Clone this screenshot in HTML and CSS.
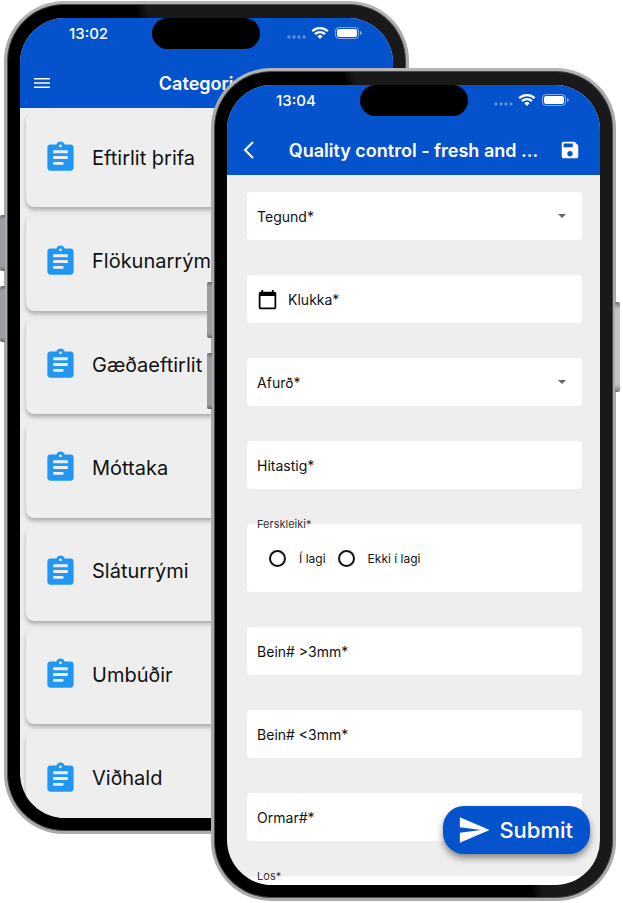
FILE: index.html
```html
<!DOCTYPE html>
<html lang="is">

<head>
    <meta charset="UTF-8">
    <meta name="viewport" content="width=device-width, initial-scale=1.0">
    <title>Quality control</title>
    <link rel="stylesheet" href="styles.css">
</head>

<body>
    <!-- shared icons -->
    <svg class="sprite" aria-hidden="true">
        <symbol id="assignment" viewBox="0 0 24 24">
            <path d="M19 3h-4.18C14.4 1.84 13.3 1 12 1c-1.3 0-2.4.84-2.82 2H5c-1.1 0-2 .9-2 2v14c0 1.100.9 2 2 2h14c1.100 0 2-.9 2-2V5c0-1.100-.9-2-2-2zm-7 0c.55 0 1 .45 1 1s-.45 1-1 1-1-.45-1-1 .45-1 1-1zm2 14H7v-2h7v2zm3-4H7v-2h10v2zm0-4H7V7h10v2z" />
        </symbol>
        <symbol id="signal" viewBox="0 0 76 14">
            <g opacity=".35">
                <circle cx="3" cy="11" r="1.700" />
                <circle cx="8" cy="11" r="1.700" />
                <circle cx="13" cy="11" r="1.700" />
                <circle cx="18" cy="11" r="1.700" />
            </g>
            <g fill="none" stroke="currentColor" stroke-width="2.300">
                <path d="M26.200 5.200a11.200 11.200 0 0 1 15.600 0" />
                <path d="M29 8.200a7.200 7.200 0 0 1 10 0" />
            </g>
            <path d="M34 13l-2.600-2.700a3.700 3.700 0 0 1 5.200 0z" />
            <rect x="49.500" y="1.500" width="23" height="11" rx="3.500" fill="none" stroke="currentColor" opacity=".5" />
            <rect x="51" y="3" width="20" height="8" rx="2.200" />
            <path d="M74 5v4c1.200-.4 1.800-1.200 1.800-2s-.6-1.600-1.800-2z" opacity=".5" />
        </symbol>
        <symbol id="arrow" viewBox="0 0 8 4">
            <path d="M0 0h8L4 4z" />
        </symbol>
    </svg>

    <main class="stage">
        <section class="phone phone-back">
            <div class="screen">
                <header class="top">
                    <div class="status">
                        <span>13:02</span>
                        <div class="island"></div>
                        <svg class="signal"><use href="#signal" /></svg>
                    </div>
                    <div class="app-bar">
                        <button class="icon-btn" type="button" aria-label="Menu">
                            <svg viewBox="0 0 22 22">
                                <path d="M3 6h16v1.600H3zM3 10.200h16v1.600H3zM3 14.400h16V16H3z" />
                            </svg>
                        </button>
                        <h1>Categories</h1>
                    </div>
                </header>
                <nav class="list">
                    <a class="card" href="#"><svg><use href="#assignment" /></svg>Eftirlit þrifa</a>
                    <a class="card" href="#"><svg><use href="#assignment" /></svg>Flökunarrými</a>
                    <a class="card" href="#"><svg><use href="#assignment" /></svg>Gæðaeftirlit</a>
                    <a class="card" href="#"><svg><use href="#assignment" /></svg>Móttaka</a>
                    <a class="card" href="#"><svg><use href="#assignment" /></svg>Sláturrými</a>
                    <a class="card" href="#"><svg><use href="#assignment" /></svg>Umbúðir</a>
                    <a class="card" href="#"><svg><use href="#assignment" /></svg>Viðhald</a>
                </nav>
            </div>
        </section>

        <section class="phone phone-front">
            <div class="side-btn"></div>
            <div class="screen">
                <header class="top">
                    <div class="status">
                        <span>13:04</span>
                        <div class="island"></div>
                        <svg class="signal"><use href="#signal" /></svg>
                    </div>
                    <div class="app-bar">
                        <button class="icon-btn" type="button" aria-label="Back">
                            <svg viewBox="0 0 22 22">
                                <path d="M15 3l-8 8 8 8" fill="none" stroke="currentColor" stroke-width="2" />
                            </svg>
                        </button>
                        <h1>Quality control - fresh and ...</h1>
                        <button class="icon-btn save" type="button" aria-label="Save">
                            <svg viewBox="0 0 24 24">
                                <path d="M17 3H5c-1.110 0-2 .9-2 2v14c0 1.100.89 2 2 2h14c1.100 0 2-.9 2-2V7l-4-4zm-5 16c-1.660 0-3-1.340-3-3s1.340-3 3-3 3 1.340 3 3-1.340 3-3 3zm3-10H5V5h10v4z" />
                            </svg>
                        </button>
                    </div>
                </header>
                <form class="form" id="qualityForm">
                    <label class="field">
                        <span>Tegund*</span>
                        <select name="tegund"><option value=""></option></select>
                        <svg class="arrow"><use href="#arrow" /></svg>
                    </label>
                    <label class="field">
                        <svg class="calendar" viewBox="0 0 24 24">
                            <path d="M20 3h-1V1h-2v2H7V1H5v2H4c-1.100 0-2 .9-2 2v16c0 1.100.9 2 2 2h16c1.100 0 2-.9 2-2V5c0-1.100-.9-2-2-2zm0 18H4V8h16v13z" />
                        </svg>
                        <span>Klukka*</span>
                        <input type="text" name="klukka">
                    </label>
                    <label class="field">
                        <span>Afurð*</span>
                        <select name="afurd"><option value=""></option></select>
                        <svg class="arrow"><use href="#arrow" /></svg>
                    </label>
                    <label class="field">
                        <span>Hitastig*</span>
                        <input type="text" name="hitastig">
                    </label>
                    <fieldset class="group">
                        <legend>Ferskleiki*</legend>
                        <label><input type="radio" name="ferskleiki" value="ok">Í lagi</label>
                        <label><input type="radio" name="ferskleiki" value="not-ok">Ekki í lagi</label>
                    </fieldset>
                    <label class="field">
                        <span>Bein# &gt;3mm*</span>
                        <input type="text" name="bein-over">
                    </label>
                    <label class="field">
                        <span>Bein# &lt;3mm*</span>
                        <input type="text" name="bein-under">
                    </label>
                    <label class="field">
                        <span>Ormar#*</span>
                        <input type="text" name="ormar">
                    </label>
                    <fieldset class="group">
                        <legend>Los*</legend>
                    </fieldset>
                </form>
                <button class="submit" type="submit" form="qualityForm">
                    <svg viewBox="0 0 24 24">
                        <path d="M2.010 21L23 12 2.010 3 2 10l15 2-15 2z" />
                    </svg>
                    Submit
                </button>
            </div>
        </section>
    </main>
</body>

</html>
```

FILE: styles.css
```css
* {
    box-sizing: border-box;
}

body {
    margin: 0;
    background-color: #fff;
    font-family: Inter, "Noto Sans", sans-serif;
    color: #111;
}

svg {
    display: block;
    flex: none;
    fill: currentColor;
}

button {
    border: 0;
    padding: 0;
    background: none;
    color: inherit;
    font: inherit;
    cursor: pointer;
}

.sprite {
    position: absolute;
    width: 0;
    height: 0;
}

/* both phones share one cell, the second one lies over the first */
.stage {
    display: grid;
    overflow: hidden;
}

.phone {
    grid-area: 1 / 1;
    position: relative;
    width: 65%;
    min-height: 0;
    aspect-ratio: 405 / 833;
    padding: 14px 13px 13px;
    border: 3px solid #a9aaae;
    border-top-color: #b4b4b4;
    border-radius: 60px;
    background: linear-gradient(77deg, #000 54%, #191919 56%) padding-box, #a9aaae border-box;
    box-shadow: inset 0 0 0 1px #4a4a4c;
}

.phone-back {
    margin: 1px 0 0 4px;
    align-self: start;
}

.phone-front {
    margin: 68px 7px 2px 0;
    justify-self: end;
    z-index: 1;
}

/* volume buttons */
.phone::before,
.phone::after,
.side-btn {
    content: "";
    position: absolute;
    left: -7px;
    top: 211px;
    width: 5px;
    height: 56px;
    border-radius: 2px 0 0 2px;
    background: linear-gradient(#66676b, #9b9da2 8%, #9b9da2 92%, #66676b);
}

.phone::after {
    top: 282px;
}

.side-btn {
    left: auto;
    right: -7px;
    top: 231px;
    height: 90px;
    border-radius: 0 2px 2px 0;
    background: linear-gradient(#777, #c4c4c4 8%, #c4c4c4 92%, #777);
}

.screen {
    position: relative;
    display: flex;
    flex-direction: column;
    height: 100%;
    overflow: hidden;
    border-radius: 45px;
    background-color: #eee;
}

.top {
    flex: none;
    background-color: #0453cd;
    color: #fff;
}

.status {
    position: relative;
    display: flex;
    justify-content: space-between;
    align-items: center;
    height: 30px;
    margin-bottom: 10px;
    padding: 0 31px 0 49px;
    font-size: 15px;
    font-weight: 500;
}

.island {
    position: absolute;
    top: 0;
    left: 50%;
    width: 108px;
    height: 31px;
    transform: translateX(-50%);
    border-radius: 16px;
    background-color: #000;
}

.signal {
    width: 76px;
    height: 14px;
}

.app-bar {
    display: grid;
    grid-template-columns: 60px 1fr 60px;
    align-items: center;
    height: 50px;
}

.app-bar h1 {
    margin: 0;
    font-size: 18px;
    font-weight: 600;
    text-align: center;
    white-space: nowrap;
}

.icon-btn {
    justify-self: start;
    margin-left: 11px;
}

.icon-btn svg {
    width: 22px;
    height: 22px;
}

.save {
    justify-self: end;
    margin: 0 19px 0 0;
}

/* categories: the last card runs under the edge of the screen */
.list {
    flex: 1;
    display: grid;
    grid-auto-rows: 1fr;
    margin-bottom: -14px;
}

.card {
    display: flex;
    align-items: center;
    gap: 14px;
    margin: 4px 6px;
    padding: 0 17px 4px;
    border-radius: 8px;
    background-color: #eee;
    box-shadow: 0 3px 4px rgba(0, 0, 0, .28);
    color: #111;
    font-size: 20px;
    text-decoration: none;
    white-space: nowrap;
}

.card svg {
    width: 35px;
    height: 35px;
    color: #2196f3;
}

.form {
    display: flex;
    flex-direction: column;
    gap: 35px;
    padding: 17px 18px 0 20px;
}

.field {
    flex: none;
    display: flex;
    align-items: center;
    gap: 10px;
    height: 48px;
    padding: 0 10px;
    border-radius: 4px;
    background-color: #fff;
    font-size: 14px;
}

.field input,
.field select {
    flex: 1;
    min-width: 0;
    height: 100%;
    border: 0;
    outline: 0;
    background: none;
    font: inherit;
    appearance: none;
}

.calendar {
    width: 21px;
    height: 21px;
    color: #000;
}

.arrow {
    width: 8px;
    height: 4px;
    margin-right: 6px;
    color: #666;
}

.group {
    flex: none;
    position: relative;
    display: flex;
    align-items: flex-start;
    gap: 12px;
    height: 68px;
    margin: 0;
    padding: 26px 22px 0;
    border: 0;
    border-radius: 4px;
    background-color: #fff;
    font-size: 12px;
}

.group legend {
    position: absolute;
    top: -7px;
    left: 10px;
    padding: 0;
    color: #333;
    font-size: 11px;
    line-height: 14px;
}

.group label {
    display: flex;
    align-items: center;
    gap: 13px;
}

.group input {
    width: 17px;
    height: 17px;
    margin: 0;
    border: 2px solid #111;
    border-radius: 50%;
    appearance: none;
}

.group input:checked {
    background: radial-gradient(#111 40%, transparent 45%);
}

.submit {
    position: absolute;
    right: 10px;
    bottom: 31px;
    display: flex;
    align-items: center;
    gap: 8px;
    height: 48px;
    padding: 0 17px 0 14px;
    border-radius: 21px;
    background-color: #0453cd;
    box-shadow: 0 4px 7px rgba(0, 0, 0, .45);
    color: #fff;
    font-size: 22px;
    font-weight: 500;
}

.submit svg {
    width: 34px;
    height: 34px;
}
```
